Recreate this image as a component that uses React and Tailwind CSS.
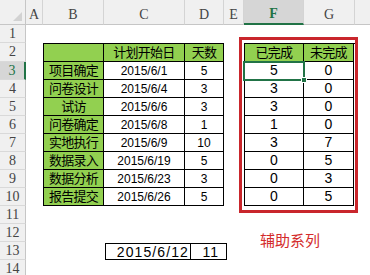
import React from 'react';

// Column header cells (A..H) in the first grid row; H runs off the right edge
const colHeads = [
  { label: 'A', active: false },
  { label: 'B', active: false },
  { label: 'C', active: false },
  { label: 'D', active: false },
  { label: 'E', active: false },
  { label: 'F', active: true },
  { label: 'G', active: false },
  { label: '', active: false },
];

const rowHeads = [
  { n: 1, cls: 'row-start-2' },
  { n: 2, cls: 'row-start-3' },
  { n: 3, cls: 'row-start-4', active: true },
  { n: 4, cls: 'row-start-5' },
  { n: 5, cls: 'row-start-6' },
  { n: 6, cls: 'row-start-7' },
  { n: 7, cls: 'row-start-8' },
  { n: 8, cls: 'row-start-9' },
  { n: 9, cls: 'row-start-10' },
  { n: 10, cls: 'row-start-11' },
  { n: 11, cls: 'row-start-12' },
  { n: 12, cls: 'row-start-13' },
  { n: 13, cls: 'row-start-14' },
  { n: 14, cls: 'row-start-15' },
];

const tasks = [
  ['项目确定', '2015/6/1', '5'],
  ['问卷设计', '2015/6/4', '3'],
  ['试访', '2015/6/6', '3'],
  ['问卷确定', '2015/6/8', '1'],
  ['实地执行', '2015/6/9', '10'],
  ['数据录入', '2015/6/19', '5'],
  ['数据分析', '2015/6/23', '3'],
  ['报告提交', '2015/6/26', '5'],
];

const helper = [
  [5, 0],
  [3, 0],
  [3, 0],
  [1, 0],
  [3, 7],
  [0, 5],
  [0, 3],
  [0, 5],
];

const cjk = "font-['Liberation_Sans','Noto_Sans_CJK_SC',sans-serif]";
const cell = 'flex items-center justify-center border-r border-b border-black';

export default function App() {
  return (
    <div className="relative w-[370px] h-[275px] overflow-hidden bg-white">
      <div className="grid w-max grid-cols-[26px_17px_61px_81px_39px_20px_60px_51px_80px] grid-rows-[25px_18px_19px_repeat(12,18px)]">
        {/* corner */}
        <div className="row-start-1 col-start-1 relative bg-[#f0f0f0] border-r border-b border-[#c6c6c6]">
          <div className="absolute right-[3px] bottom-[3px] w-0 h-0 border-l-[9px] border-l-transparent border-b-[9px] border-b-[#d2d2d2]" />
        </div>

        {/* column headers */}
        {colHeads.map((c, i) => (
          <div
            key={i}
            className={`row-start-1 flex items-end justify-center pb-[2px] border-r border-[#d4d4d4] font-['Liberation_Serif',serif] text-[14px] leading-none ${
              c.active
                ? 'bg-[#d6d6d6] text-[#217346] font-bold border-b-2 border-b-[#217346]'
                : 'bg-[#f0f0f0] text-[#444] border-b border-b-[#c6c6c6]'
            }`}
          >
            {c.label}
          </div>
        ))}

        {/* row headers */}
        {rowHeads.map((r) => (
          <div
            key={r.n}
            className={`col-start-1 ${r.cls} flex items-center justify-center border-b border-[#d9d9d9] font-['Liberation_Serif',serif] text-[14px] leading-none ${
              r.active
                ? 'bg-[#d6d6d6] text-[#217346] border-r-2 border-r-[#217346]'
                : 'bg-[#f0f0f0] text-[#444] border-r border-r-[#c6c6c6]'
            }`}
          >
            {r.n}
          </div>
        ))}

        {/* schedule table B2:D10 */}
        <div className={`col-start-3 col-span-3 row-start-3 row-span-9 grid grid-cols-[60px_81px_39px] grid-rows-[18px_repeat(8,18px)] border-l border-t border-black text-black ${cjk}`}>
          <div className={`${cell} bg-[#92d050]`} />
          <div className={`${cell} bg-[#92d050] text-[13px] tracking-[-0.75px]`}>计划开始日</div>
          <div className={`${cell} bg-[#92d050] text-[13px] tracking-[-0.75px]`}>天数</div>
          {tasks.map(([name, date, days]) => (
            <React.Fragment key={name}>
              <div className={`${cell} bg-[#92d050] text-[13px] tracking-[-0.75px]`}>{name}</div>
              <div className={`${cell} bg-white text-[12px]`}>{date}</div>
              <div className={`${cell} bg-white text-[12px]`}>{days}</div>
            </React.Fragment>
          ))}
        </div>

        {/* helper series F2:G10 */}
        <div className={`col-start-7 col-span-2 row-start-3 row-span-9 grid grid-cols-[59px_50px] grid-rows-[18px_repeat(8,18px)] border-l border-t border-black text-black ${cjk}`}>
          <div className={`${cell} bg-[#92d050] text-[13px] tracking-[-0.75px]`}>已完成</div>
          <div className={`${cell} bg-[#92d050] text-[13px] tracking-[-0.75px]`}>未完成</div>
          {helper.map(([done, left], i) => (
            <React.Fragment key={i}>
              <div className={`${cell} bg-white text-[14px]`}>{done}</div>
              <div className={`${cell} bg-white text-[14px]`}>{left}</div>
            </React.Fragment>
          ))}
        </div>

        {/* C13:D13 */}
        <div className="col-start-4 col-span-3 row-start-14 flex pt-[1px] pl-[1px] font-['Liberation_Sans',sans-serif] text-[14px] text-black leading-none">
          <div className="w-[86px] h-[17px] flex items-center justify-end pr-[1px] border border-black tracking-[1.1px]">2015/6/12</div>
          <div className="w-[36px] h-[17px] flex items-center justify-end pr-[7px] border-y border-r border-black tracking-[1px]">11</div>
        </div>
      </div>

      {/* active cell F3 */}
      <div className="absolute left-[243px] top-[61px] w-[62px] h-[20px] border-2 border-[#217346]" />
      <div className="absolute left-[301px] top-[77px] w-[6px] h-[6px] bg-[#217346] border border-white" />

      {/* red outline shape around helper series */}
      <div className="absolute left-[239px] top-[37px] w-[119px] h-[176px] border-[3px] border-[#c9262c]" />

      {/* text box */}
      <div className="absolute left-[260px] top-[232px] text-[15px] leading-none text-[#d42b2b] font-['Noto_Sans_CJK_SC',sans-serif]">
        辅助系列
      </div>
    </div>
  );
}
